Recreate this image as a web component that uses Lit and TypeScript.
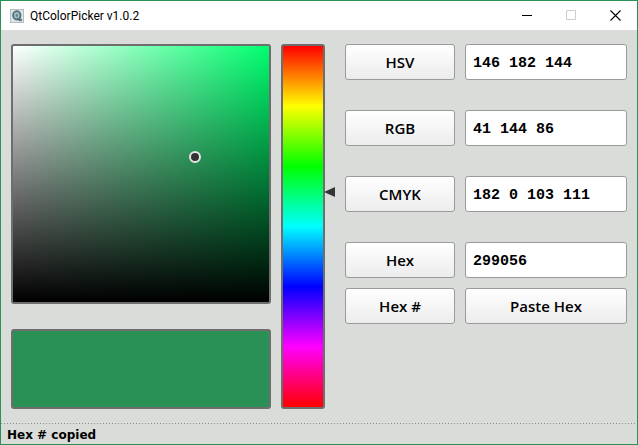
import { LitElement, html, css } from "lit";
import { customElement, state } from "lit/decorators.js";

const readouts = [
  { id: "hsv", label: "HSV", value: "146 182 144" },
  { id: "rgb", label: "RGB", value: "41 144 86" },
  { id: "cmyk", label: "CMYK", value: "182 0 103 111" },
  { id: "hex", label: "Hex", value: "299056" },
];

@customElement("app-root")
export class AppRoot extends LitElement {
  @state() private hue = 146;
  @state() private sat = 182;
  @state() private val = 144;

  static styles = css`
    :host {
      display: block;
    }
    * {
      box-sizing: border-box;
    }
    .window {
      display: flex;
      flex-direction: column;
      min-height: 100vh;
      border: 1px solid #299056;
      background: #dadcd9;
      color: #000;
    }
    .titlebar {
      display: flex;
      align-items: center;
      height: 29px;
      padding-left: 9px;
      background: #fff;
    }
    .logo {
      width: 14px;
      height: 14px;
      margin-right: 6px;
    }
    h1 {
      flex: 1;
      margin: 0;
      font: 400 12px/16px Roboto, "Noto Sans", sans-serif;
    }
    .caption {
      display: grid;
      place-items: center;
      width: 44px;
      height: 29px;
      padding: 0;
      border: 0;
      background: none;
    }
    .content {
      display: grid;
      grid-template-columns: 260px 54px minmax(0, 1fr);
      align-items: start;
      flex: 1;
      padding: 14px 10px;
    }
    .left {
      display: grid;
      gap: 25px;
    }
    .plane {
      position: relative;
      height: 260px;
      border: 2px solid #6e6e6e;
      border-radius: 3px;
      background:
        linear-gradient(to top, #000, transparent),
        linear-gradient(to right, #fff, transparent),
        var(--pure);
      background-origin: padding-box;
    }
    .marker {
      position: absolute;
      width: 12px;
      height: 12px;
      margin: -6px;
      border: 2px solid #e6e6e6;
      border-radius: 50%;
      background: #333;
    }
    .swatch {
      height: 80px;
      border: 2px solid #6e6e6e;
      border-radius: 3px;
      background: #299056;
    }
    .hue {
      position: relative;
      display: flex;
      flex-direction: column;
      align-self: stretch;
      margin-left: 10px;
    }
    .hue input {
      appearance: none;
      writing-mode: vertical-lr;
      flex: 1 1 0;
      width: 44px;
      min-height: 0;
      margin: 0;
      border: 2px solid #6e6e6e;
      border-radius: 3px;
      background: linear-gradient(#f00, #ff0, #0f0, #0ff, #00f, #f0f, #f00);
      background-origin: padding-box;
    }
    .hue input::-webkit-slider-thumb {
      appearance: none;
      width: 40px;
      height: 2px;
      background: transparent;
    }
    .arrow {
      position: absolute;
      left: 100%;
      width: 11px;
      height: 10px;
      margin: -5px 0 0 -1px;
      fill: #333;
    }
    .values {
      display: grid;
      grid-template-columns: 110px minmax(0, 1fr);
      gap: 10px;
      padding-left: 20px;
    }
    .spaced {
      margin-bottom: 20px;
    }
    .push,
    .field {
      width: 100%;
      height: 36px;
      border: 1px solid #999b9a;
      border-radius: 3px;
      color: #000;
    }
    .push {
      padding: 0;
      background: linear-gradient(#fff, #ececec);
      font: 600 15px/20px "Open Sans", "Noto Sans", sans-serif;
    }
    .field {
      padding: 2px 7px 0;
      background: #fff;
      font: 700 15px/20px "Liberation Mono", monospace;
    }
    .status {
      height: 21px;
      padding: 4px 6px 0;
      background: repeating-linear-gradient(to right, #8c8c8c 0 1px, transparent 1px 3px) top / 100% 1px no-repeat;
      font: 700 12px/16px "DejaVu Sans", sans-serif;
    }
  `;

  render() {
    return html`
      <main class="window">
        <header class="titlebar">
          <svg class="logo" viewBox="0 0 14 14" aria-hidden="true">
            <rect x=".5" y=".5" width="13" height="13" fill="#dce5ea" stroke="#b3bdc2" />
            <ellipse cx="6.8" cy="6.3" rx="3.7" ry="4.2" fill="#9fc1cb" stroke="#536b73" stroke-width="1.8" />
            <ellipse cx="6.8" cy="6.3" rx="1.1" ry="1.6" fill="#5f7f89" />
            <path d="M7 9.2 9 11.8h2.6V10H9.9" fill="#536b73" stroke="#536b73" stroke-width=".6" />
          </svg>
          <h1>QtColorPicker v1.0.2</h1>
          <button class="caption" aria-label="Minimize">
            <svg width="11" height="11"><path d="M0 5.5h10" stroke="#000" /></svg>
          </button>
          <button class="caption" aria-label="Maximize" disabled>
            <svg width="11" height="11"><path d="M.5.5h9v9h-9z" fill="none" stroke="#ccc" /></svg>
          </button>
          <button class="caption" aria-label="Close">
            <svg width="11" height="11"><path d="m.5.5 10 10m0-10-10 10" stroke="#000" stroke-width="1.1" /></svg>
          </button>
        </header>
        <section class="content">
          <div class="left">
            <div class="plane" style="--pure: hsl(${this.hue} 100% 50%)">
              <span class="marker" style="left: ${(this.sat / 256) * 100}%; top: ${(1 - (this.val + 1) / 256) * 100}%"></span>
            </div>
            <div class="swatch"></div>
          </div>
          <div class="hue">
            <input
              type="range"
              min="0"
              max="360"
              aria-label="Hue"
              .value=${String(this.hue)}
              @input=${(e: Event) => (this.hue = Number((e.target as HTMLInputElement).value))}
            />
            <svg class="arrow" viewBox="0 0 11 10" style="top: ${(this.hue / 360) * 100}%" aria-hidden="true">
              <path d="M0 5 11 0v10z" />
            </svg>
          </div>
          <div class="values">
            ${readouts.map(
              (r) => html`
                <button class="push ${r.id === "hex" ? "" : "spaced"}" id=${r.id}>${r.label}</button>
                <input class="field" aria-labelledby=${r.id} .value=${r.value} />
              `
            )}
            <button class="push">Hex #</button>
            <button class="push">Paste Hex</button>
          </div>
        </section>
        <footer class="status" role="status">Hex # copied</footer>
      </main>
    `;
  }
}
